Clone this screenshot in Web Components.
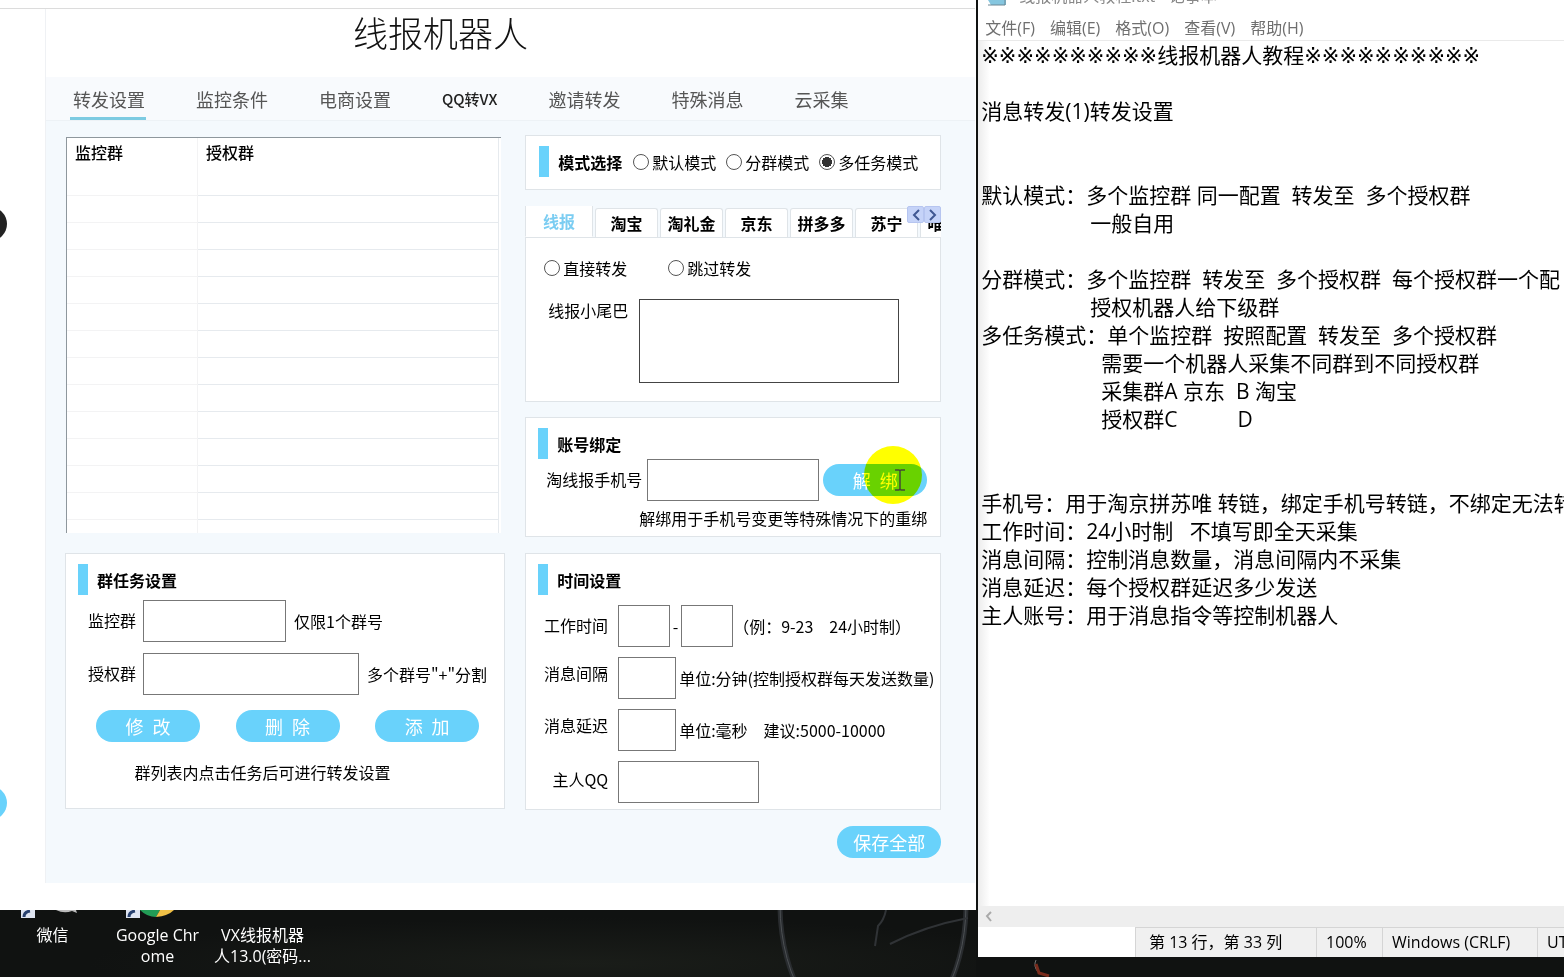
<!DOCTYPE html>
<html lang="zh-CN">
<head>
<meta charset="utf-8">
<title>线报机器人</title>
<style>
html,body{margin:0;height:100%;background:#101211}
body{font:16px/24px "Noto Sans CJK SC",sans-serif;color:#000}
</style>
</head>
<body>
<desk-top></desk-top>
<script>
const define = (name, html, setup) => customElements.define(name, class extends HTMLElement {
  connectedCallback() {
    if (this.shadowRoot) return;
    const t = document.createElement('template');
    t.innerHTML = '<style>*{box-sizing:border-box}</style>' + html;
    this.attachShadow({ mode: 'open' }).append(t.content.cloneNode(true));
    if (setup) setup(this.shadowRoot, this);
  }
});

/* Rounded action button */
define('pill-button', `<style>
:host{display:block;flex:none}
button{display:block;width:104px;height:32px;border:0;border-radius:16px;padding:0;background:#69d2fb;color:#fff;font:18px/30px "Noto Sans CJK SC",sans-serif;white-space:nowrap}
</style><button type="button"><slot></slot></button>`);

/* White card with an optional blue-marked heading */
define('group-box', `<style>
:host{display:block;background:#fff;border:1px solid #dfe4e8;padding:10px 13px 0 12px}
header{display:flex;align-items:center;height:31px;gap:9px}
header::before{content:"";width:10px;height:31px;background:#69d2fb}
h2{margin:0;font-size:16px;line-height:24px;font-weight:700}
</style><header><h2></h2><slot name="beside"></slot></header><slot></slot>`, (r, el) => {
  r.querySelector('h2').textContent = el.getAttribute('heading');
});

/* Set of radio buttons; options are separated with | and the chosen one starts with * */
define('radio-set', `<style>
:host{display:flex;gap:10px}
label{display:flex;align-items:center;gap:3px;white-space:nowrap}
input{appearance:none;width:16px;height:16px;margin:0;border:1px solid #555;border-radius:50%;background:#fff}
input:checked{background:radial-gradient(circle,#333 0 5px,#fff 5px)}
</style>`, (r, el) => {
  el.getAttribute('options').split('|').forEach(o => {
    const l = document.createElement('label'), i = document.createElement('input');
    i.type = 'radio'; i.name = 'choice'; i.checked = o[0] === '*';
    l.append(i, o.replace('*', ''));
    r.append(l);
  });
});

/* Label, text box(es) and hint on one line */
define('field-row', `<style>
:host{display:flex;align-items:center;height:42px;white-space:pre}
label{flex:none;width:var(--label,80px);padding-right:var(--label-gap,10px);padding-bottom:var(--lift,2px);text-align:right}
input{flex:none;width:var(--field,58px);height:42px;border:1px solid #777;background:#fff;padding:0 8px;font:inherit;border-radius:0}
i{width:11px;text-align:center;font-style:normal}
slot{display:block}
.hint{padding-left:var(--hint-gap,3px)}
</style><label for="f"></label><input id="f" type="text"><div class="hint"><slot></slot></div>`, (r, el) => {
  r.querySelector('label').textContent = el.getAttribute('label');
  if (el.hasAttribute('range')) {
    const dash = document.createElement('i'), end = document.createElement('input');
    dash.textContent = '-'; end.type = 'text'; end.setAttribute('aria-label', '结束时间');
    r.querySelector('input').after(dash, end);
  }
});

/* Main navigation */
define('nav-tabs', `<style>
:host{display:block;background:#f8fafd;border-bottom:1px solid #edf2f6}
nav{display:flex;gap:51px;padding:0 27px;height:43px}
a{color:#555;text-decoration:none;font-size:18px;line-height:44px;white-space:nowrap;position:relative}
a.latin{font-size:15px;color:#222;font-weight:500}
a[aria-current]::after{content:"";position:absolute;left:-3px;right:-1px;bottom:0;height:3px;background:#7dcbe2}
</style><nav><a href="#1" aria-current="page">转发设置</a><a href="#2">监控条件</a><a href="#3">电商设置</a><a href="#4" class="latin">QQ转VX</a><a href="#5">邀请转发</a><a href="#6">特殊消息</a><a href="#7">云采集</a></nav>`);

/* Group list */
define('group-list', `<style>
:host{display:block;height:396px;overflow:hidden;background:#fff;border:solid #8e979d;border-width:1px 0 0 1px;margin:0 4px 0 1px}
table{width:100%;border-collapse:separate;border-spacing:0;table-layout:fixed}
th{height:31px;padding:0 8px 4px;text-align:left;font-weight:500}
td{height:27px;padding:0;border-bottom:1px solid #f3f3f4}
th,td{border-right:1px solid #f3f3f4}
th:first-child{width:131px}
th:last-child,td:last-child{border-color:#e6eaee}
div{padding-right:2px}
</style><div><table><thead><tr><th>监控群</th><th>授权群</th></tr></thead><tbody></tbody></table></div>`, r => {
  r.querySelector('tbody').innerHTML = '<tr><td></td><td></td></tr>'.repeat(14);
});

/* Platform tabs with the forwarding settings */
define('platform-tabs', `<style>
:host{display:block;position:relative}
.tabs{display:flex;align-items:flex-end;gap:2px;height:32px;overflow:hidden;border-bottom:1px solid #dfe4e8}
button{flex:none;width:63px;height:29px;border:1px solid #dfe4e8;border-bottom:0;border-radius:3px 3px 0 0;background:#fff;padding:0;color:#000;font:700 16px/26px "Noto Sans CJK SC",sans-serif}
button[aria-selected=true]{width:68px;height:32px;color:#7bcdf2;line-height:30px;border-bottom:1px solid #fff;border-radius:0}
.scroll{position:absolute;right:0;top:0;display:flex}
.scroll button{width:17px;height:17px;border:1px solid #b6c5f0;border-radius:2px;background:#c5d3f8}
.scroll svg{display:block;margin:auto}
.body{border:1px solid #dfe4e8;border-top:0;background:#fff;padding:18px 41px 18px 18px}
radio-set{gap:41px}
.tail{display:flex;margin-top:19px;gap:11px;padding-left:4px}
.tail label{line-height:22px}
textarea{flex:1;min-width:0;height:84px;border:1px solid #444;background:#fff;resize:none;border-radius:0}
</style><div class="tabs" role="tablist"><button role="tab" aria-selected="true">线报</button><button role="tab">淘宝</button><button role="tab">淘礼金</button><button role="tab">京东</button><button role="tab">拼多多</button><button role="tab">苏宁</button><button role="tab">唯品会</button></div>
<div class="scroll"><button aria-label="向左"><svg width="10" height="12"><path d="M8 1L3 6l5 5" fill="none" stroke="#3f5792" stroke-width="2"/></svg></button><button aria-label="向右"><svg width="10" height="12"><path d="M2 1l5 5-5 5" fill="none" stroke="#3f5792" stroke-width="2"/></svg></button></div>
<div class="body"><radio-set options="直接转发|跳过转发"></radio-set><div class="tail"><label for="t">线报小尾巴</label><textarea id="t"></textarea></div></div>`);

/* The robot's window */
define('bot-window', `<style>
:host{display:block;background:#fff;overflow:hidden;border-right:1px solid #fff}
.top{height:9px;border-bottom:1px solid #dcdcdc}
.frame{display:grid;grid-template-columns:45px minmax(0,1fr);padding-bottom:27px}
.side{position:relative}
.dot{position:absolute;width:34px;height:34px;border-radius:50%;left:-27px}
.dark{top:198px;background:#222}.blue{top:777px;background:#69d2fb}
.panel{border-left:1px solid #eff1f4;background:#f4f9fd}
h1{margin:0;background:#fff;height:68px;padding-right:140px;text-align:center;font-size:35px;line-height:46px;font-weight:300;color:#111}
.cols{display:grid;grid-template-columns:minmax(0,440fr) minmax(0,416fr);gap:20px;padding:14px 34px 25px 19px}
.left{display:flex;flex-direction:column;gap:20px;padding-top:2px}
.right{display:flex;flex-direction:column;gap:16px}
.mode{padding-left:13px;padding-bottom:12px}
.mode radio-set{margin-left:2px}
.task{--label:65px;--label-gap:7px;--hint-gap:8px;padding-bottom:24px}
.task field-row:first-of-type{--field:143px;margin:5px 0 11px}
.task field-row:last-of-type{--field:216px}
.acts{display:flex;justify-content:space-between;margin:15px 12px 18px 18px}
p{margin:0;white-space:nowrap}
.task p{text-align:center;padding-right:44px}
.bind{margin-top:-1px;padding-bottom:6px}
.bind .line{display:flex;justify-content:flex-end;gap:4px}
.bind field-row{--label:101px;--label-gap:5px;--field:172px;--hint-gap:0px}
.unbind{position:relative;align-self:center}
.click{position:absolute;left:41px;top:-18px;width:58px;height:58px;border-radius:50%;background:#ff0;mix-blend-mode:multiply}
.caret{position:absolute;left:71px;top:5px}
.bind p{text-align:right;margin-top:5px}
.time{padding-bottom:6px}
.time field-row{margin-top:10px}
.time field-row[range]{--field:52px;--hint-gap:0px}
.time field-row.unit{--lift:10px}
.time field-row.owner{--field:141px;--lift:6px}
pill-button.save{align-self:flex-end}
</style>
<div class="top"></div>
<div class="frame"><div class="side"><span class="dot dark"></span><span class="dot blue"></span></div>
<div class="panel"><h1>线报机器人</h1><nav-tabs></nav-tabs>
<div class="cols"><div class="left"><group-list></group-list>
<group-box class="task" heading="群任务设置"><field-row label="监控群">仅限1个群号</field-row><field-row label="授权群">多个群号"+"分割</field-row>
<div class="acts"><pill-button>修&ensp;改</pill-button><pill-button>删&ensp;除</pill-button><pill-button>添&ensp;加</pill-button></div><p>群列表内点击任务后可进行转发设置</p></group-box></div>
<div class="right"><group-box class="mode" heading="模式选择"><radio-set slot="beside" options="默认模式|分群模式|*多任务模式"></radio-set></group-box>
<platform-tabs></platform-tabs>
<group-box class="bind" heading="账号绑定"><div class="line"><field-row label="淘线报手机号"></field-row><div class="unbind"><pill-button>解&ensp;绑</pill-button><span class="click"></span><svg class="caret" width="12" height="22" fill="none" stroke="#454a35" stroke-width="1.5"><path d="M1 1h4l1 1 1-1h4M6 2v18M1 21h4l1-1 1 1h4"/></svg></div></div><p>解绑用于手机号变更等特殊情况下的重绑</p></group-box>
<group-box class="time" heading="时间设置"><field-row label="工作时间" range>（例：9-23　24小时制）</field-row><field-row class="unit" label="消息间隔">单位:分钟(控制授权群每天发送数量)</field-row><field-row class="unit" label="消息延迟">单位:毫秒　建议:5000-10000</field-row><field-row class="owner" label="主人QQ"></field-row></group-box>
<pill-button class="save">保存全部</pill-button></div></div></div></div>`);

/* Shortcut whose picture is mostly hidden by the window above */
define('desktop-icon', `<style>
:host{display:block;width:105px;color:#fff;text-align:center;line-height:21px;font-family:"Open Sans","Noto Sans CJK SC",sans-serif}
svg{display:block;margin-bottom:7px}
slot{display:block;white-space:pre}
</style><svg width="105" height="8"></svg><slot></slot>`, (r, el) => {
  const arrow = '<path fill="#dfe5f2" d="M21 0h14v8H21z"/><path d="M24 7q0-5 6-6" fill="none" stroke="#27406f" stroke-width="3"/>';
  const art = {
    chat: arrow + '<path d="M56 0q8 4 16 1l5 2-1-3z" fill="#bbb"/>',
    chrome: arrow + '<path d="M35 0q7 7 16 7l4-7z" fill="#229b55"/><path d="M55 0l-4 7q12-1 18-7z" fill="#f0c046"/>'
  };
  r.querySelector('svg').innerHTML = art[el.getAttribute('art')] || '';
});

/* Text editor */
define('notepad-window', `<style>
:host{display:flex;flex-direction:column;min-width:0;background:#fff;overflow:hidden;font-family:"Open Sans","Noto Sans CJK SC",sans-serif}
.title{display:flex;align-items:flex-end;gap:12px;height:8px;padding-left:9px;overflow:hidden;color:#888;white-space:pre}
.title svg{flex:none;align-self:flex-start}
nav{display:flex;gap:15px;padding:8px 7px 0;border-bottom:1px solid #eaeaea}
nav a{color:#6f6f6f;text-decoration:none;white-space:nowrap}
textarea{flex:1;display:block;width:100%;border:0;margin:0;padding:0 0 0 3px;resize:none;outline:0;overflow:hidden;white-space:pre;background:linear-gradient(90deg,#ececec,#fff 12px);color:#000;font:21px/28px "Open Sans","DejaVu Sans","Noto Sans CJK SC",sans-serif}
.bar{height:21px;background:#eee;padding:5px 7px}
.bar svg{display:block}
footer{display:flex;justify-content:flex-end;height:30px;overflow:hidden;white-space:pre}
footer div{flex:none;background:#f0f0f0;border-left:1px solid #d5d5d5;border-top:1px solid #d5d5d5;line-height:28px;padding-left:9px;width:66px}
footer .pos{width:181px;padding-left:13px}
footer .eol{width:155px}
footer .enc{width:27px}
</style><div class="title"><svg width="20" height="6"><path d="M1 0h18v5H4z" fill="#85c6df"/><path d="M1 5h17V0" fill="none" stroke="#6a8794"/></svg><span>线报机器人教程.txt - 记事本</span></div>
<nav><a href="#f">文件(F)</a><a href="#e">编辑(E)</a><a href="#o">格式(O)</a><a href="#v">查看(V)</a><a href="#h">帮助(H)</a></nav>
<textarea aria-label="文本编辑器" spellcheck="false"></textarea>
<div class="bar"><svg width="8" height="11"><path d="M6 1L2 5l4 5" fill="none" stroke="#aaa" stroke-width="2"/></svg></div>
<footer><div class="pos">第 13 行，第 33 列</div><div>100%</div><div class="eol">Windows (CRLF)</div><div class="enc">UT</div></footer>`, r => {
  const s = n => ' '.repeat(n), star = '※'.repeat(10);
  r.querySelector('textarea').value = [
    star + '线报机器人教程' + star, '', '消息转发(1)转发设置', '', '',
    '默认模式：多个监控群 同一配置  转发至  多个授权群',
    s(20) + '一般自用', '',
    '分群模式：多个监控群  转发至  多个授权群  每个授权群一个配',
    s(20) + '授权机器人给下级群',
    '多任务模式：单个监控群  按照配置  转发至  多个授权群',
    s(22) + '需要一个机器人采集不同群到不同授权群',
    s(22) + '采集群A 京东  B 淘宝',
    s(22) + '授权群C' + s(11) + 'D', '', '',
    '手机号：用于淘京拼苏唯 转链，绑定手机号转链，不绑定无法转',
    '工作时间：24小时制   不填写即全天采集',
    '消息间隔：控制消息数量，消息间隔内不采集',
    '消息延迟：每个授权群延迟多少发送',
    '主人账号：用于消息指令等控制机器人'
  ].join('\n');
});

define('desk-top', `<style>
:host{display:grid;grid-template-columns:minmax(0,5fr) minmax(0,3fr);gap:2px;min-height:100vh;background:#101211;overflow:hidden}
.col{display:flex;flex-direction:column}
.strip{display:flex;flex:1;background:radial-gradient(ellipse at 60% 80%,#1a1d19,#101211 60%)}
.wheel{margin-left:auto;height:67px}
notepad-window{flex:1}
.under{height:20px}
svg{display:block}
</style>
<div class="col"><bot-window></bot-window><div class="strip"><desktop-icon art="chat">微信</desktop-icon><desktop-icon art="chrome">Google Chr
ome</desktop-icon><desktop-icon>VX线报机器
人13.0(密码...</desktop-icon>
<svg class="wheel" width="216" height="67" fill="none"><ellipse cx="113" cy="-5" rx="93" ry="140" stroke="#292c2f" stroke-width="5"/><ellipse cx="113" cy="-5" rx="93" ry="140" stroke="#4c5053"/><path d="M126 0q-2 10-8 16l-3 20M130 34Q165 16 208 8" stroke="#303336" stroke-width="2"/></svg></div></div>
<div class="col"><notepad-window></notepad-window><div class="under"><svg width="100" height="20" fill="none"><path d="M58 3q-3 6 2 12" stroke="#777"/><path d="M58 7l3 9 10 3" stroke="#7a2c1d" stroke-width="3"/></svg></div></div>`);
</script>
</body>
</html>
